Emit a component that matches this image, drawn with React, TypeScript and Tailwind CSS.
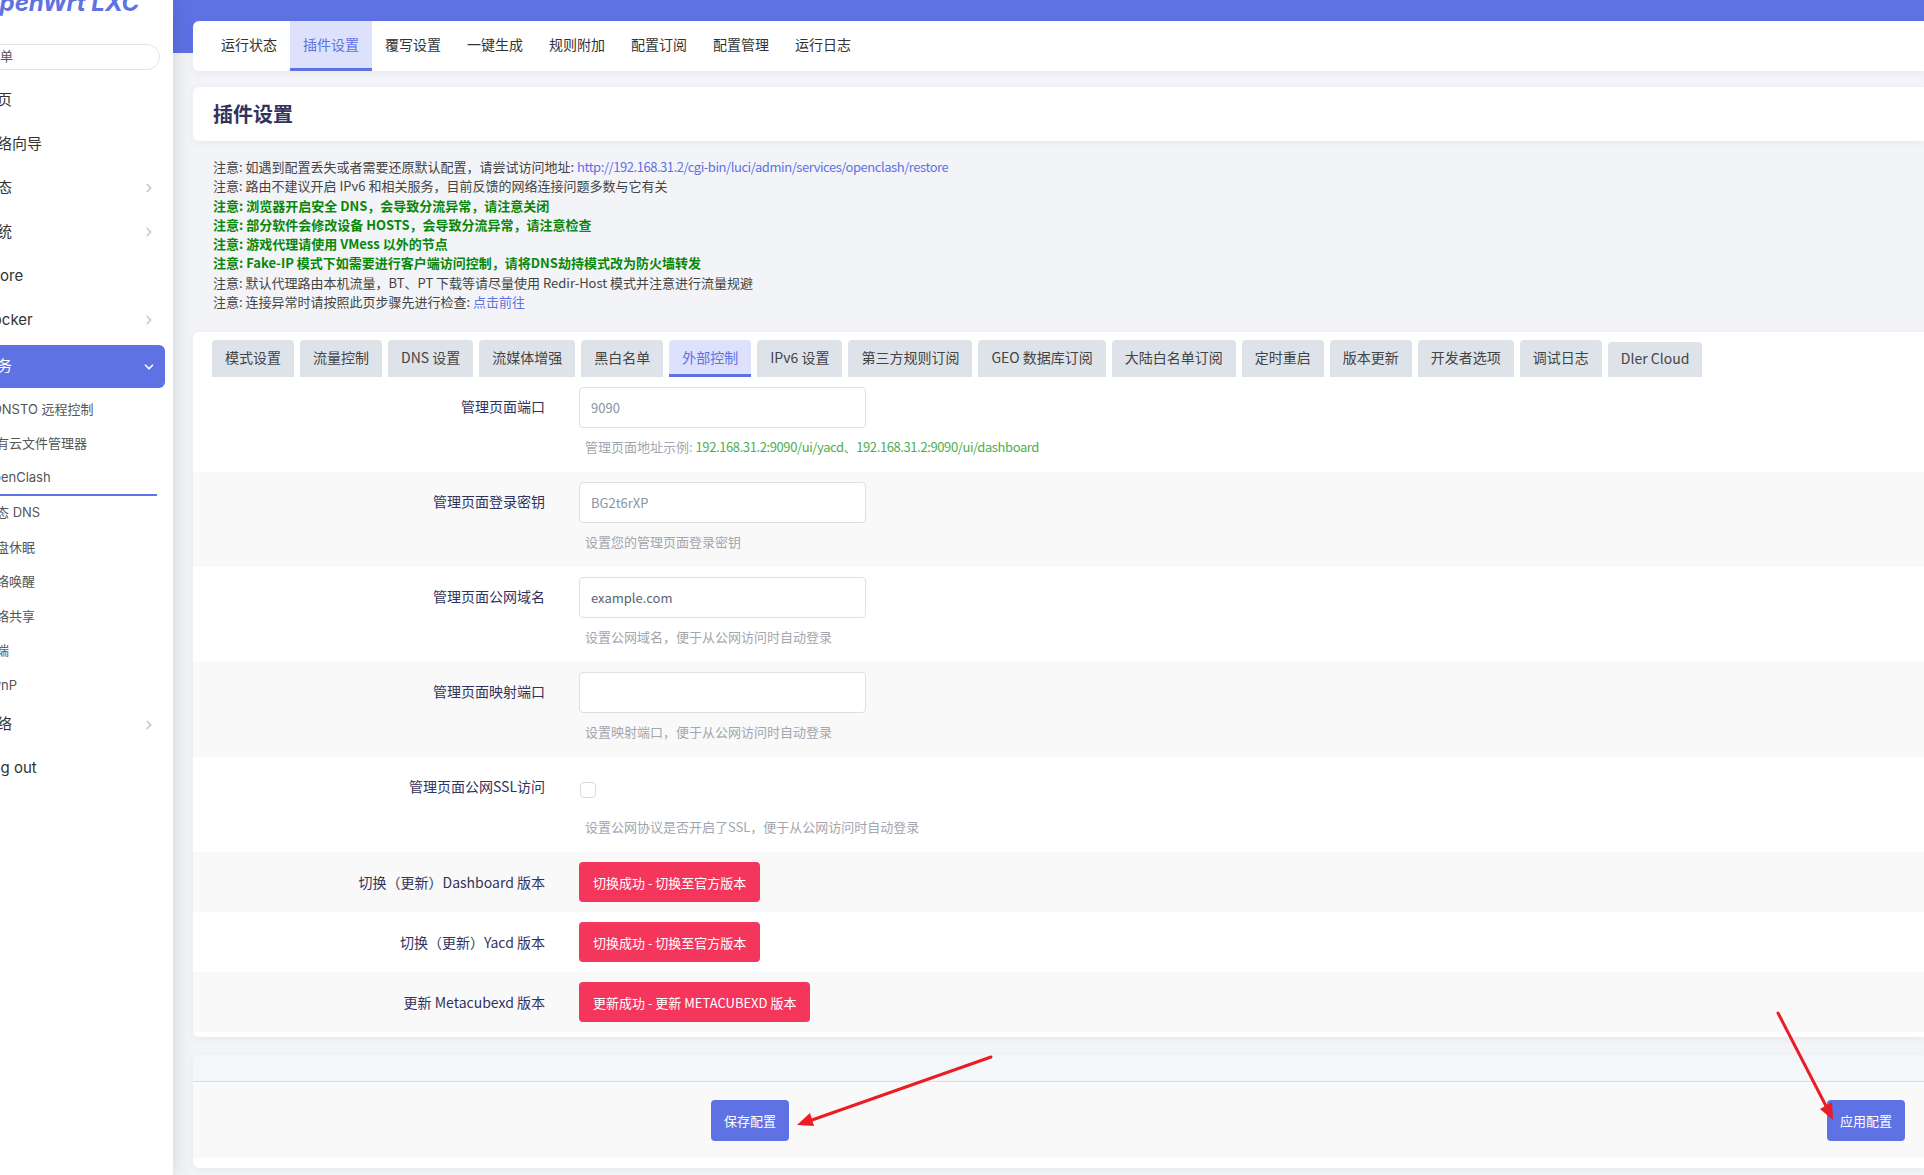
import { ChevronRight, ChevronDown } from 'lucide-react';

const sideFont = { fontFamily: 'Inter, "Noto Sans CJK SC", sans-serif' };
const mainFont = { fontFamily: '"Noto Sans CJK SC", "Noto Sans", sans-serif' };

const topTabs = ['运行状态', '插件设置', '覆写设置', '一键生成', '规则附加', '配置订阅', '配置管理', '运行日志'];
const subTabs = [
  '模式设置', '流量控制', 'DNS 设置', '流媒体增强', '黑白名单', '外部控制', 'IPv6 设置', '第三方规则订阅',
  'GEO 数据库订阅', '大陆白名单订阅', '定时重启', '版本更新', '开发者选项', '调试日志', 'Dler Cloud',
];

const mainMenu: [string, boolean][] = [
  ['首页', false], ['网络向导', false], ['状态', true], ['系统', true], ['iStore', false], ['Docker', true],
];
const subMenu = ['DDNSTO 远程控制', '易有云文件管理器', 'OpenClash', '动态 DNS', '硬盘休眠', '网络唤醒', '网络共享', '终端', 'UPnP'];

function Sidebar() {
  return (
    <aside className="w-[173px] shrink-0 h-[1175px] overflow-hidden bg-white relative z-10 shadow-[2px_0_18px_rgba(0,0,0,0.12)]" style={sideFont}>
      <div className="-mt-[9px] -ml-[19px] text-[24px] leading-[24px] font-bold text-[#5e72e4] whitespace-nowrap italic">OpenWrt LXC</div>
      <div className="mt-[29px] h-[26px] w-[187px] -ml-[27px] rounded-full border border-[#e3e3e3] flex items-center px-[13px] text-[13px] text-[#555]">
        菜单
      </div>
      <div className="mt-[8px] w-[165px]">
        {mainMenu.map(([label, chev]) => (
          <div key={label} className="h-[44px] flex items-center justify-between pr-[9px] text-[15px] text-[#333]">
            <span className="-ml-[18px] whitespace-nowrap">{label}</span>
            {chev && <ChevronRight size={14} strokeWidth={3} className="text-[#c4c8ce]" />}
          </div>
        ))}
        <div className="mt-[3px] h-[43px] flex items-center justify-between pr-[9px] text-[15px] text-white bg-[#5e72e4] rounded-r-[6px]">
          <span className="-ml-[18px] whitespace-nowrap">服务</span>
          <ChevronDown size={14} strokeWidth={3} />
        </div>
        <div className="mt-[4px]">
          {subMenu.map((label) => (
            <div
              key={label}
              className={
                label === 'OpenClash'
                  ? 'h-[34.5px] w-[157px] flex items-center text-[13px] text-[#555] border-b-2 border-[#5e72e4]'
                  : 'h-[34.5px] flex items-center text-[13px] text-[#555]'
              }
            >
              <span className="-ml-[17px] whitespace-nowrap">{label}</span>
            </div>
          ))}
        </div>
        <div className="h-[44px] flex items-center justify-between pr-[9px] text-[15px] text-[#333]">
          <span className="-ml-[18px] whitespace-nowrap">网络</span>
          <ChevronRight size={14} strokeWidth={3} className="text-[#c4c8ce]" />
        </div>
        <div className="h-[44px] flex items-center text-[15px] text-[#333]">
          <span className="-ml-[17px] whitespace-nowrap">Log out</span>
        </div>
      </div>
    </aside>
  );
}

function Notes() {
  const green = 'text-[#0a860a] font-bold';
  return (
    <div className="pl-[20px] pt-[16px] pb-[21px] text-[13px] leading-[19.3px] text-[#444]">
      <div>
        注意: 如遇到配置丢失或者需要还原默认配置，请尝试访问地址:{' '}
        <span className="text-[#5e72e4] tracking-[-0.45px]">http://192.168.31.2/cgi-bin/luci/admin/services/openclash/restore</span>
      </div>
      <div>注意: 路由不建议开启 IPv6 和相关服务，目前反馈的网络连接问题多数与它有关</div>
      <div className={green}>注意: 浏览器开启安全 DNS，会导致分流异常，请注意关闭</div>
      <div className={green}>注意: 部分软件会修改设备 HOSTS，会导致分流异常，请注意检查</div>
      <div className={green}>注意: 游戏代理请使用 VMess 以外的节点</div>
      <div className={green}>注意: Fake-IP 模式下如需要进行客户端访问控制，请将DNS劫持模式改为防火墙转发</div>
      <div>注意: 默认代理路由本机流量，BT、PT 下载等请尽量使用 Redir-Host 模式并注意进行流量规避</div>
      <div>
        注意: 连接异常时请按照此页步骤先进行检查: <span className="text-[#5e72e4]">点击前往</span>
      </div>
    </div>
  );
}

type Field = { label: string; value?: string; dark?: boolean; checkbox?: boolean; desc: React.ReactNode };

const fields: Field[] = [
  {
    label: '管理页面端口',
    value: '9090',
    desc: (
      <>
        管理页面地址示例:{' '}
        <span className="text-[#4fae4f] tracking-[-0.4px]">192.168.31.2:9090/ui/yacd、192.168.31.2:9090/ui/dashboard</span>
      </>
    ),
  },
  { label: '管理页面登录密钥', value: 'BG2t6rXP', desc: '设置您的管理页面登录密钥' },
  { label: '管理页面公网域名', value: 'example.com', dark: true, desc: '设置公网域名，便于从公网访问时自动登录' },
  { label: '管理页面映射端口', value: '', desc: '设置映射端口，便于从公网访问时自动登录' },
  { label: '管理页面公网SSL访问', checkbox: true, desc: '设置公网协议是否开启了SSL，便于从公网访问时自动登录' },
];

const actions = [
  ['切换（更新）Dashboard 版本', '切换成功 - 切换至官方版本'],
  ['切换（更新）Yacd 版本', '切换成功 - 切换至官方版本'],
  ['更新 Metacubexd 版本', '更新成功 - 更新 METACUBEXD 版本'],
];

function FormRows() {
  return (
    <div>
      {fields.map((f, i) => (
        <div key={f.label} className={`flex pt-[10px] pb-[17px] ${i % 2 ? 'bg-[#f9f9f9]' : 'bg-white'}`}>
          <div className="w-[352px] shrink-0 text-right pt-[9px] text-[14px] leading-[20px] text-[#32325d]">{f.label}</div>
          <div className="ml-[34px]">
            {f.checkbox ? (
              <div className="h-[41px] flex items-center">
                <div className="w-[16px] h-[16px] mt-[4px] ml-[1px] rounded-[4px] border border-[#d6d9de] bg-white" />
              </div>
            ) : (
              <div
                className={`w-[287px] h-[41px] border border-[#dcdfe6] rounded-[4px] bg-white flex items-center px-[11px] text-[13px] ${
                  f.dark ? 'text-[#5a6270]' : 'text-[#8a94a6]'
                }`}
              >
                {f.value}
              </div>
            )}
            <div className="mt-[11px] pl-[6px] text-[13px] leading-[16px] text-[#a3a6ae]">{f.desc}</div>
          </div>
        </div>
      ))}
      {actions.map(([label, btn], i) => (
        <div key={label} className={`flex items-center py-[10px] ${i % 2 ? 'bg-white' : 'bg-[#f9f9f9]'}`}>
          <div className="w-[352px] shrink-0 text-right text-[14px] text-[#32325d]">{label}</div>
          <button className="ml-[34px] h-[40px] px-[14px] rounded-[4px] bg-[#f5365c] text-white text-[13px] whitespace-nowrap">
            {btn}
          </button>
        </div>
      ))}
    </div>
  );
}

function Arrows() {
  return (
    <svg className="absolute inset-0 pointer-events-none" width="1924" height="1175" viewBox="0 0 1924 1175">
      <line x1="991" y1="1057" x2="812" y2="1120" stroke="#ea1c24" strokeWidth="3" strokeLinecap="round" />
      <polygon points="797,1125 810,1113 814,1126" fill="#ea1c24" />
      <line x1="1778" y1="1013" x2="1826" y2="1106" stroke="#ea1c24" strokeWidth="3" strokeLinecap="round" />
      <polygon points="1833,1120 1820,1109 1832,1102" fill="#ea1c24" />
    </svg>
  );
}

export default function App() {
  return (
    <div className="relative flex w-full h-[1175px] overflow-hidden bg-[#f3f4f7]" style={mainFont}>
      <Sidebar />
      <main className="flex-1 min-w-0 pl-[20px] pt-[21px] bg-[linear-gradient(#5e72e4_0px,#5e72e4_53px,#f3f4f7_53px)]">
        <div className="h-[50px] bg-white rounded-l-[6px] pl-[15px] flex shadow-[0_2px_8px_rgba(0,0,0,0.05)]">
          {topTabs.map((t) => (
            <div
              key={t}
              className={
                t === '插件设置'
                  ? 'px-[13px] flex items-center text-[14px] bg-[#dde1fc] text-[#5e72e4] border-b-[3px] border-[#5e72e4]'
                  : 'px-[13px] flex items-center text-[14px] text-[#333] border-b-[3px] border-transparent'
              }
            >
              {t}
            </div>
          ))}
        </div>

        <div className="mt-[16px] h-[54px] bg-white rounded-l-[6px] pl-[20px] flex items-center shadow-[0_2px_8px_rgba(0,0,0,0.05)]">
          <h2 className="text-[20px] font-bold text-[#32325d]">插件设置</h2>
        </div>

        <Notes />

        <div className="bg-white rounded-l-[6px] pb-[5px] shadow-[0_2px_8px_rgba(0,0,0,0.05)]">
          <div className="flex items-end gap-[6px] pl-[19px] pt-[8px] h-[45px]">
            {subTabs.map((t) => (
              <div
                key={t}
                className={
                  t === '外部控制'
                    ? 'h-[37px] px-[13px] flex items-center rounded-t-[4px] text-[14px] bg-[#dde1fc] text-[#5e72e4] border-b-[3px] border-[#5e72e4]'
                    : t === 'Dler Cloud'
                      ? 'h-[35px] px-[13px] flex items-center rounded-t-[4px] text-[14px] bg-[#dee3e9] text-[#444] border-b-[3px] border-transparent'
                      : 'h-[37px] px-[13px] flex items-center rounded-t-[4px] text-[14px] bg-[#dee3e9] text-[#444] border-b-[3px] border-transparent'
                }
              >
                {t}
              </div>
            ))}
          </div>
          <FormRows />
        </div>

        <div className="mt-[18px] bg-white rounded-l-[6px] pb-[10px] shadow-[0_2px_8px_rgba(0,0,0,0.05)]">
          <div className="h-[27px] bg-[#f4f7fa] rounded-tl-[6px] border-b border-[#dddddd]" />
          <div className="h-[76px] bg-[#f9f9f9] flex items-center pl-[518px] pr-[19px]">
            <button className="h-[41px] px-[13px] rounded-[4px] bg-[#5e72e4] text-white text-[13px]">保存配置</button>
            <button className="ml-auto h-[41px] px-[13px] rounded-[4px] bg-[#5e72e4] text-white text-[13px]">应用配置</button>
          </div>
        </div>
      </main>
      <Arrows />
    </div>
  );
}
